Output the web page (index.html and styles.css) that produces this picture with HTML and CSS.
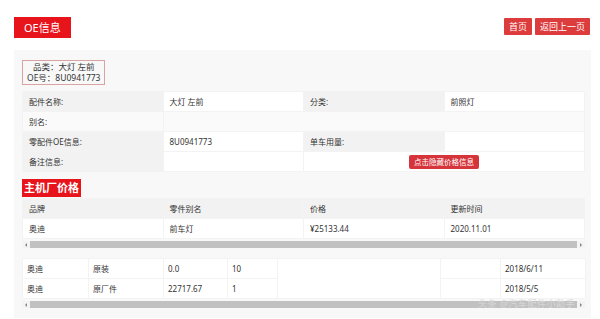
FILE: index.html
```html
<!DOCTYPE html>
<html lang="zh-CN">
<head>
  <meta charset="utf-8">
  <title>OE信息</title>
  <link rel="stylesheet" href="styles.css">
</head>
<body>

  <div class="top">
    <div class="oe-title">OE信息</div>
    <div class="nav">
      <a href="#">首页</a>
      <a href="#">返回上一页</a>
    </div>
  </div>

  <div class="panel">
    <div class="info-box">
      品类：大灯 左前<br>
      OE号：8U0941773
    </div>

    <!-- 配件信息 -->
    <table class="grid info">
      <tr>
        <td class="label">配件名称:</td>
        <td>大灯 左前</td>
        <td class="label">分类:</td>
        <td>前照灯</td>
      </tr>
      <tr class="light">
        <td class="label">别名:</td>
        <td colspan="3"></td>
      </tr>
      <tr>
        <td class="label">零配件OE信息:</td>
        <td>8U0941773</td>
        <td class="label">单车用量:</td>
        <td></td>
      </tr>
      <tr>
        <td class="label">备注信息:</td>
        <td></td>
        <td colspan="2" class="center"><span class="hide-btn">点击隐藏价格信息</span></td>
      </tr>
    </table>

    <div class="sub-title">主机厂价格</div>
    <table class="grid price">
      <tr class="head">
        <td>品牌</td>
        <td>零件别名</td>
        <td>价格</td>
        <td>更新时间</td>
      </tr>
      <tr>
        <td>奥迪</td>
        <td>前车灯</td>
        <td>¥25133.44</td>
        <td>2020.11.01</td>
      </tr>
    </table>
    <div class="scroll">
      <span class="arrow left"></span><span class="thumb"></span><span class="arrow right"></span>
    </div>

    <table class="grid market">
      <colgroup>
        <col style="width:66px"><col style="width:75px"><col style="width:64px"><col style="width:50px">
        <col style="width:163px"><col style="width:60px"><col style="width:85px">
      </colgroup>
      <tr>
        <td>奥迪</td>
        <td>原装</td>
        <td>0.0</td>
        <td>10</td>
        <td rowspan="2"></td>
        <td class="no-left"></td>
        <td class="no-left">2018/6/11</td>
      </tr>
      <tr>
        <td>奥迪</td>
        <td>原厂件</td>
        <td>22717.67</td>
        <td>1</td>
        <td class="no-left"></td>
        <td class="no-left">2018/5/5</td>
      </tr>
    </table>
    <div class="scroll last">
      <span class="arrow left"></span><span class="thumb"></span><span class="arrow right"></span>
      <span class="watermark">头条 @汽车配件小助手</span>
    </div>
  </div>

</body>
</html>
```

FILE: styles.css
```css
body {
  margin: 0;
  font-family: "Noto Sans", "Noto Sans CJK SC", sans-serif;
  color: #333;
  background: #fff;
}
.top {
  display: flex;
  justify-content: space-between;
  align-items: flex-start;
  padding: 17px 10px 0 14px;
}
.oe-title {
  background: #e8141b;
  color: #fff;
  font-size: 11px;
  height: 21px;
  line-height: 21px;
  padding: 0 10px;
}
.nav {
  display: flex;
  gap: 3px;
  margin-top: 1px;
}
.nav a {
  background: #dc3c3c;
  color: #fff;
  text-decoration: none;
  font-size: 9px;
  height: 17px;
  line-height: 17px;
  padding: 0 5px;
  border-radius: 1px;
}
.panel {
  position: relative;
  margin: 12px 9px 0 14px;
  padding: 10px 6px 10px 8px;
  background: #f8f8f8;
}
.info-box {
  width: fit-content;
  border: 1px solid #d9a3a3;
  padding: 1px 4px;
  font-size: 8.5px;
  line-height: 10.5px;
  text-align: center;
  margin-bottom: 6px;
}
table.grid {
  width: 100%;
  border-collapse: collapse;
  table-layout: fixed;
  font-size: 8px;
}
table.grid td {
  height: 19px;
  padding: 0 6px;
  border: 1px solid #f3f3f3;
  background: #fff;
  white-space: nowrap;
}
table.info td.label {
  background: #f2f2f2;
}
table.info tr.light td {
  background: #fafafa;
}
table.grid td.center {
  text-align: center;
}
.hide-btn {
  display: inline-block;
  background: #d5343b;
  color: #fff;
  font-size: 7.5px;
  line-height: 14px;
  padding: 0 5px;
  border-radius: 2px;
}
.sub-title {
  width: fit-content;
  margin-top: 7px;
  background: #e8141b;
  color: #fff;
  font-size: 11px;
  font-weight: bold;
  height: 18px;
  line-height: 18px;
  padding: 0 2px;
}
table.price {
  margin-top: 1px;
}
table.price tr.head td {
  background: #f2f2f2;
}
.scroll {
  position: relative;
  display: flex;
  align-items: center;
  height: 7px;
  margin-top: 2px;
  background: #f4f4f4;
}
.scroll .thumb {
  flex: 1;
  height: 7px;
  background: #c1c1c1;
}
.scroll .arrow {
  width: 0;
  height: 0;
  margin: 0 3px;
  border-top: 2px solid transparent;
  border-bottom: 2px solid transparent;
}
.scroll .arrow.left {
  border-right: 2px solid #888;
}
.scroll .arrow.right {
  border-left: 2px solid #888;
}
table.market {
  margin-top: 10px;
}
table.market td {
  padding: 0 4px;
}
table.market td.no-left {
  border-left: none;
}
.watermark {
  position: absolute;
  right: 10px;
  top: -2px;
  font-size: 9px;
  line-height: 10px;
  color: #d8d8d8;
  letter-spacing: 0.5px;
}
```
